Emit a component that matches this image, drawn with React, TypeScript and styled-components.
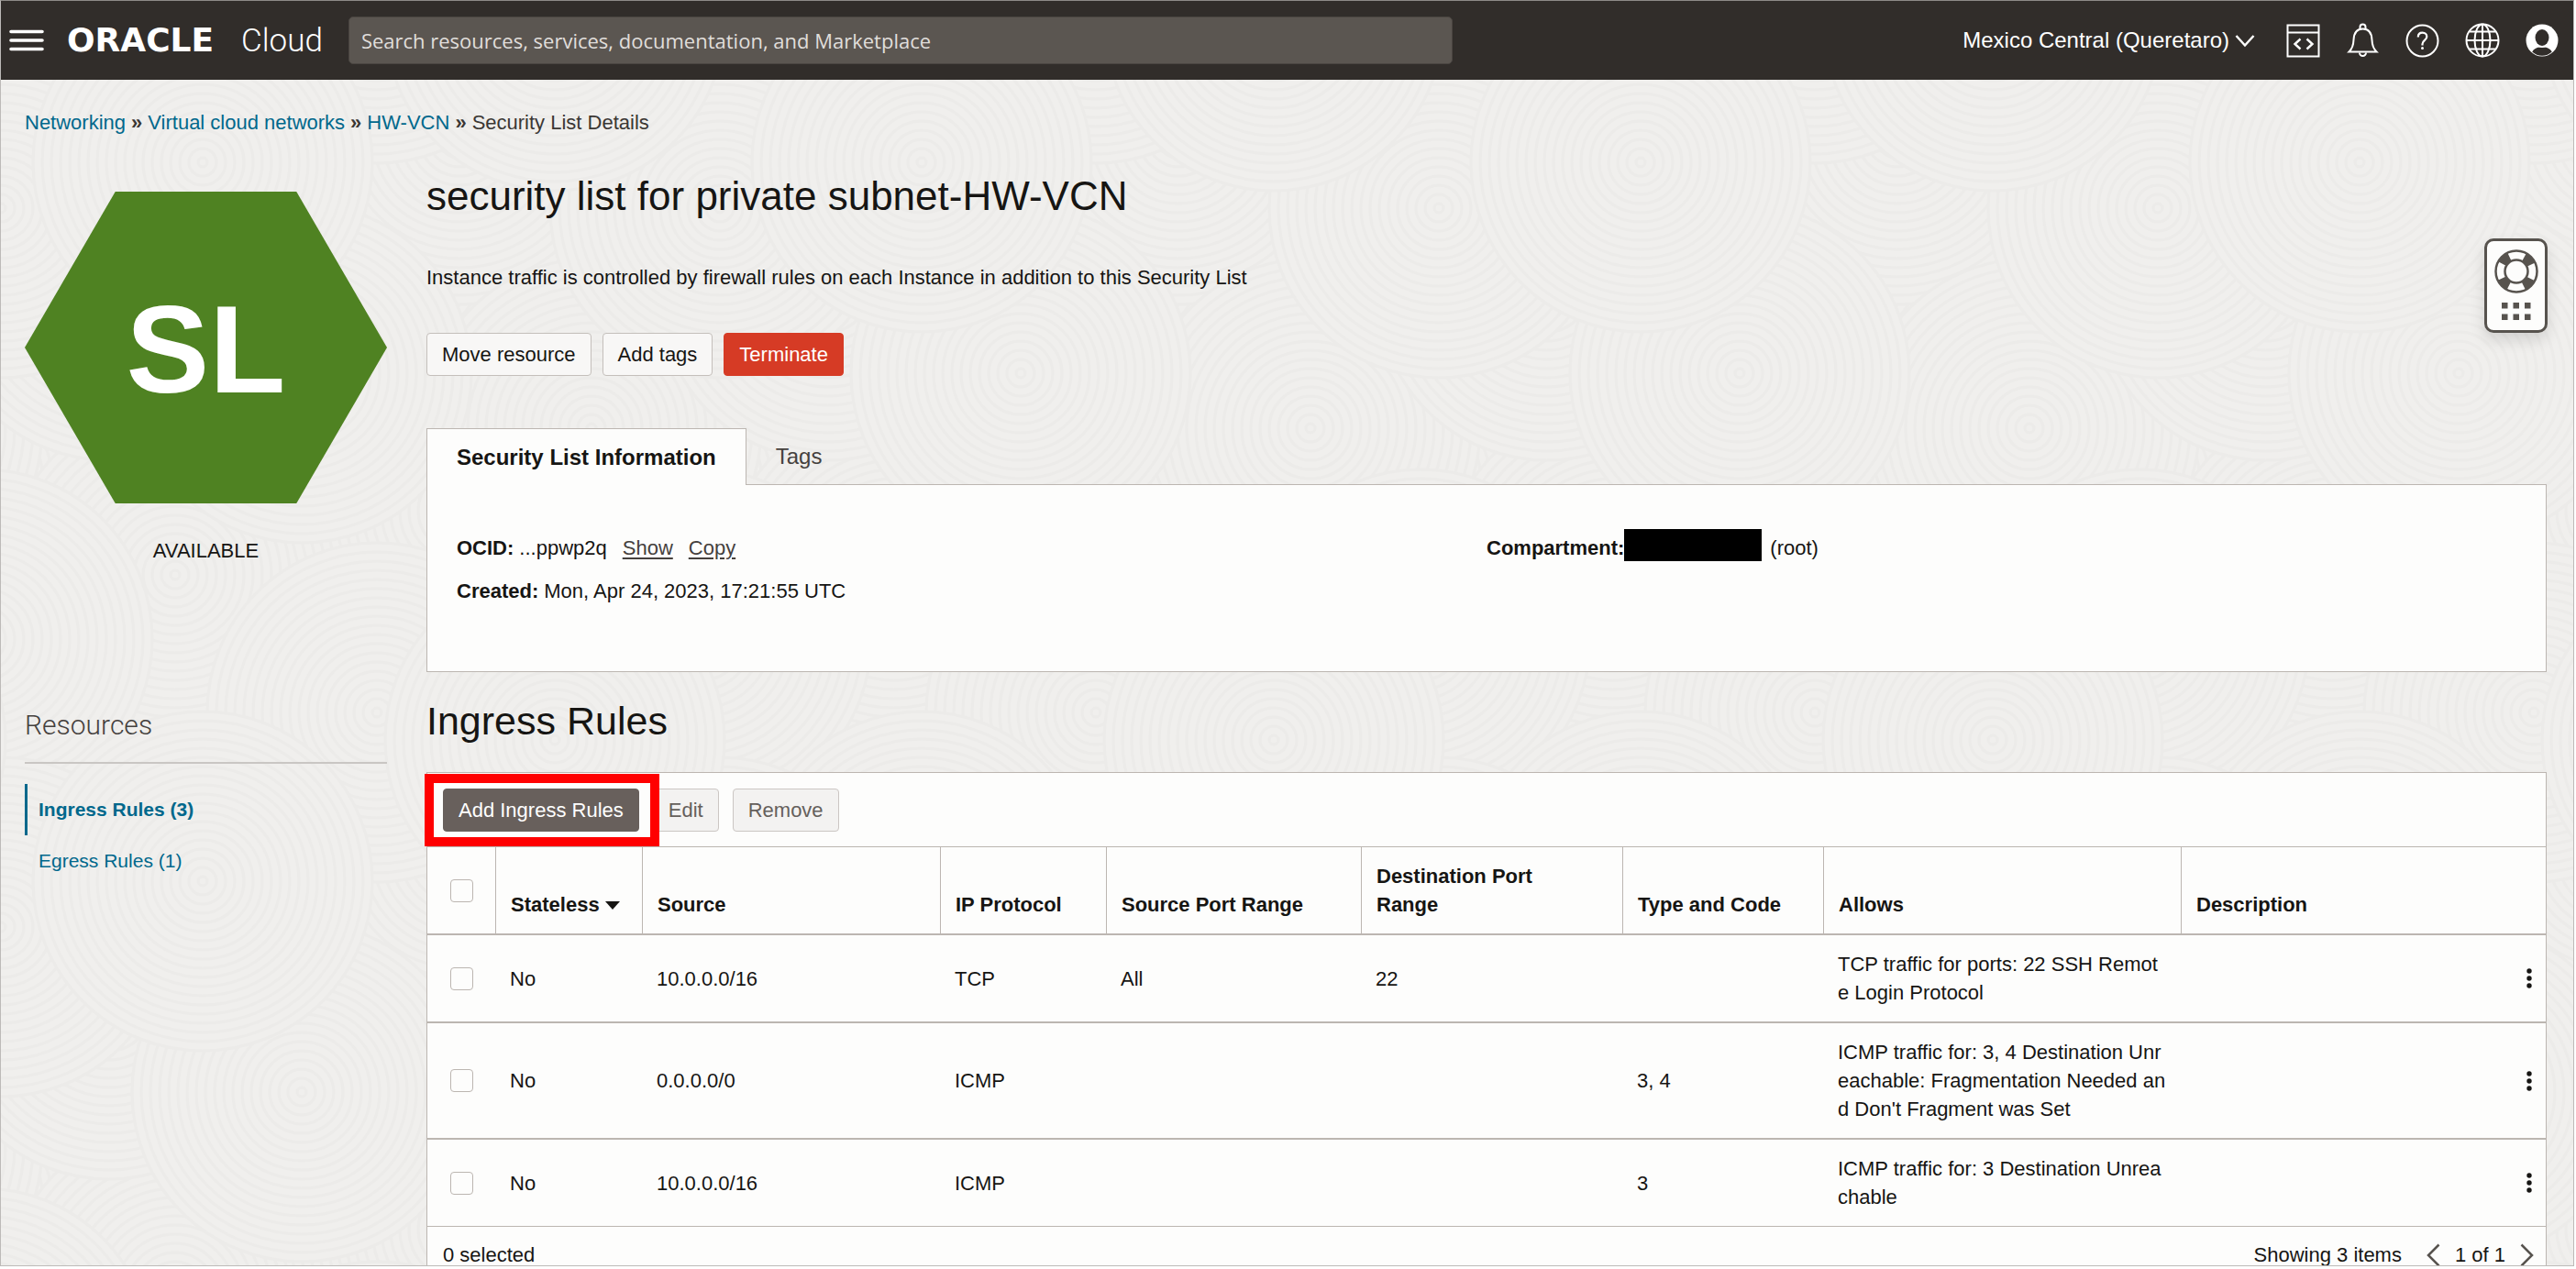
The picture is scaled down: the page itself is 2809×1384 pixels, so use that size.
import React from "react";
import styled, { createGlobalStyle, css } from "styled-components";

const sans = `"Liberation Sans", Arial, Helvetica, sans-serif`;
const ink = "#161513";
const link = "#00688c";
const line = "#bcb6b1";
const card = "#fdfdfc";

const GlobalStyle = createGlobalStyle`
  *, *::before, *::after { box-sizing: border-box; }
  body { margin: 0; background: #fff; color: ${ink}; font: 22px/30px ${sans}; }
  button, input { font: inherit; color: inherit; }
  button { cursor: pointer; }
  h1, h2, p, dl, dd, ul { margin: 0; padding: 0; }
  ul { list-style: none; }
`;

/* ---------- window ---------- */

const Frame = styled.div`
  position: relative;
  height: calc(100vh - 3px);
  min-height: 600px;
  margin-right: 2px;
  overflow: hidden;
  border: 1px solid #bdbab8;
  border-top-color: #8d8a87;
  background: #f0efed;
`;

const Texture = styled.svg`
  position: absolute;
  inset: 0;
  width: 100%;
  height: 100%;
`;

const Page = styled.div`
  position: relative;
`;

/* ---------- top bar ---------- */

const TopBar = styled.header`
  display: flex;
  align-items: center;
  height: 86px;
  padding: 0 16px 0 9px;
  background: #312d2a;
  color: #fff;
`;

const IconButton = styled.button`
  display: grid;
  place-items: center;
  flex: none;
  padding: 0;
  border: 0;
  background: none;
  color: inherit;
`;

const Brand = styled.a`
  display: flex;
  align-items: baseline;
  gap: 6px;
  margin: 0 28px 0 25px;
  color: #fff;
  text-decoration: none;
  line-height: 40px;
`;

const BrandName = styled.span`
  width: 184px;
  font-family: "DejaVu Sans", Verdana, sans-serif;
  font-size: 36px;
  font-weight: 700;
`;

const BrandProduct = styled.span`
  font-family: Roboto, sans-serif;
  font-size: 35px;
  font-weight: 300;
`;

const Search = styled.input`
  width: 43.3%;
  height: 52px;
  padding: 0 13px;
  border: 1px solid #4a4541;
  border-radius: 5px;
  background: #5b5651;
  font-family: "Open Sans", sans-serif;
  color: #fff;
  &::placeholder { color: #e0dedb; opacity: 1; }
`;

const Tools = styled.div`
  display: flex;
  align-items: center;
  gap: 28px;
  margin-left: auto;
`;

const Region = styled.button`
  display: flex;
  align-items: center;
  gap: 6px;
  margin-right: 6px;
  padding: 0;
  border: 0;
  background: none;
  font-size: 24px;
`;

/* ---------- body ---------- */

const Breadcrumb = styled.nav`
  display: flex;
  gap: 6px;
  padding: 32px 28px 0 26px;
  color: #3b3734;
`;

const TextLink = styled.a`
  color: ${link};
  text-decoration: none;
`;

const Body = styled.div`
  display: grid;
  grid-template-columns: 395px minmax(0, 1fr);
  column-gap: 43px;
  padding: 39px 29px 0 26px;
`;

const Side = styled.aside`
  padding-top: 21px;
`;

const Hexagon = styled.div`
  display: grid;
  place-items: center;
  height: 340px;
  padding-top: 4px;
  background: #4f8222;
  clip-path: polygon(25% 0, 75% 0, 100% 50%, 75% 100%, 25% 100%, 0 50%);
  color: #fff;
  font-size: 136px;
  font-weight: 700;
  line-height: 160px;
`;

const Status = styled.p`
  margin-top: 37px;
  text-align: center;
`;

const SideTitle = styled.h2`
  margin-top: 157px;
  padding-bottom: 22px;
  border-bottom: 2px solid #c9c6c3;
  color: #45413e;
  font: 300 30px/36px Roboto, sans-serif;
`;

const SideList = styled.ul`
  margin-top: 22px;
`;

const SideLink = styled(TextLink)<{ $active?: boolean }>`
  display: flex;
  align-items: center;
  height: 56px;
  padding-left: 12px;
  border-left: 3px solid transparent;
  font-size: 21px;
  ${(p) => p.$active && css`border-left-color: ${link}; font-weight: 700;`}
`;

const Title = styled.h1`
  font-size: 44px;
  font-weight: 400;
  line-height: 52px;
`;

const Lead = styled.p`
  margin-top: 48px;
`;

const Actions = styled.div`
  display: flex;
  gap: 12px;
  margin-top: 45px;
`;

type Tone = "plain" | "danger" | "primary" | "muted";

const tones = {
  plain: css`background: #f8f7f6; border-color: #c4bfbb; color: ${ink};`,
  danger: css`background: #d63b25; border-color: #d63b25; color: #fff;`,
  primary: css`background: #68605c; border-color: #68605c; color: #fff;`,
  muted: css`background: #f3f2f1; border-color: #cbc6c3; color: #65605c;`,
};

const Button = styled.button<{ $tone: Tone }>`
  height: 47px;
  padding: 0 16px;
  border: 1px solid;
  border-radius: 4px;
  ${(p) => tones[p.$tone]}
`;

const Tabs = styled.div`
  display: flex;
  margin-top: 57px;
`;

const Tab = styled.button<{ $active?: boolean }>`
  height: 61px;
  padding: 0 32px;
  border: 0;
  background: none;
  font-size: 24px;
  color: #45413e;
  ${(p) => p.$active && css`
    position: relative;
    height: 62px;
    margin-bottom: -1px;
    border: 1px solid ${line};
    border-bottom: 0;
    background: ${card};
    font-weight: 700;
    color: ${ink};
  `}
`;

const Panel = styled.section`
  border: 1px solid ${line};
  background: ${card};
`;

const Facts = styled.dl`
  display: grid;
  grid-template-columns: 1fr 1fr;
  gap: 17px 0;
  padding: 54px 32px 72px;
`;

const Fact = styled.div`
  display: flex;
  align-items: center;
  height: 30px;
`;

const Term = styled.dt`
  font-weight: 700;
`;

const Value = styled.dd`
  display: flex;
  align-items: center;
  margin-left: 6px;
`;

const RedactedValue = styled(Value)`
  margin-left: 0;
`;

const Redaction = styled.span`
  width: 150px;
  height: 35px;
  margin-right: 9px;
  margin-bottom: 8px;
  background: #000;
`;

const UnderLink = styled.a`
  margin-left: 17px;
  color: #45413e;
  text-underline-offset: 3px;
`;

const SectionTitle = styled.h2`
  margin: 27px 0 30px;
  font-size: 43px;
  font-weight: 400;
  line-height: 52px;
`;

const Toolbar = styled.div`
  display: flex;
  gap: 15px;
  padding: 17px 17px 16px;
`;

const Highlight = styled.div`
  position: relative;
  z-index: 1;
  &::after {
    content: "";
    position: absolute;
    inset: -16px -22px -16px -20px;
    border: 10px solid #f00;
    pointer-events: none;
  }
`;

/* ---------- table ---------- */

const Table = styled.table`
  width: 100%;
  table-layout: fixed;
  border-collapse: separate;
  border-spacing: 0;
  line-height: 31px;
`;

const Col = styled.col<{ $width?: string }>`
  width: ${(p) => p.$width ?? "auto"};
`;

const Head = styled.th<{ $check?: boolean }>`
  padding: 16px ${(p) => (p.$check ? 16 : 36)}px 16px 16px;
  border: solid ${line};
  border-width: 1px 0 2px ${(p) => (p.$check ? 0 : 1)}px;
  text-align: left;
  vertical-align: ${(p) => (p.$check ? "middle" : "bottom")};
`;

const HeadText = styled.span<{ $nowrap: boolean }>`
  white-space: ${(p) => (p.$nowrap ? "nowrap" : "normal")};
`;

const Cell = styled.td`
  padding: 16px;
  border-bottom: 2px solid ${line};
  word-break: break-all;
  tr:last-child > & { border-bottom-width: 1px; }
`;

const CheckWrap = styled.label`
  display: flex;
  padding-left: 9px;
`;

const Check = styled.input`
  appearance: none;
  width: 25px;
  height: 25px;
  margin: 0;
  border: 1px solid ${line};
  border-radius: 4px;
  background: ${card};
  &:checked { background: ${link}; }
`;

const RowMenu = styled(IconButton)`
  width: 8px;
  height: 30px;
  margin-left: auto;
  margin-right: -2px;
`;

const SortMark = styled.svg`
  margin-left: 6px;
  vertical-align: 2px;
`;

const Footer = styled.footer`
  display: flex;
  align-items: center;
  justify-content: space-between;
  padding: 16px 13px 16px 17px;
`;

const Pager = styled.div`
  display: flex;
  align-items: center;
  gap: 16px;
`;

const PagerText = styled.span`
  margin-right: 11px;
`;

const PagerButton = styled(IconButton)`
  color: #57534e;
`;

const HelpDock = styled.aside`
  position: absolute;
  top: 259px;
  right: 28px;
  display: flex;
  flex-direction: column;
  align-items: center;
  gap: 10px;
  width: 69px;
  height: 103px;
  padding-top: 9px;
  border: 3px solid #57534e;
  border-radius: 10px;
  background: ${card};
  color: #57534e;
  box-shadow: 0 8px 16px rgba(0, 0, 0, 0.12);
`;

/* ---------- drawings ---------- */

const TILE = 784;
const discs = [
  [20, 560, 1], [410, 690, 1], [590, 560, 1], [190, 430, 1], [480, 390, 1],
  [740, 330, 1], [60, 200, 1], [640, 200, 1], [230, 700, 1], [528, 10, 1],
  [118, 40, 1], [700, 60, 1], [390, 540, 1], [700, 470, 1], [60, 380, 1],
  [318, 230, 1], [528, 320, 1], [180, 610, 1], [610, 690, 1], [200, 140, 1],
  [420, 90, 1], [20, 720, 1],
];

function Backdrop() {
  return (
    <Texture aria-hidden="true">
      <defs>
        <g id="disc">
          {Array.from({ length: 19 }, (_, i) => (
            <circle key={i} r={185 - i * 10} fill="#f0efed" stroke="#ecebe9" strokeWidth="3" />
          ))}
        </g>
        <pattern id="rings" x="584" y="86" width={TILE} height={TILE} patternUnits="userSpaceOnUse">
          {discs.map(([x, y], i) => (
            <g key={i}>
              {[-TILE, 0, TILE].map((dx) =>
                [-TILE, 0, TILE].map((dy) => <use key={`${dx}.${dy}`} href="#disc" x={x + dx} y={y + dy} />)
              )}
            </g>
          ))}
        </pattern>
      </defs>
      <rect width="100%" height="100%" fill="url(#rings)" />
    </Texture>
  );
}

const stroke = { fill: "none", stroke: "currentColor", strokeWidth: 2 };

const MenuIcon = () => (
  <svg width="38" height="24" viewBox="0 0 38 24" {...stroke} strokeWidth="3.6" strokeLinecap="round">
    <path d="M2 2.5h34M2 12h34M2 21.5h34" />
  </svg>
);
const CodeIcon = () => (
  <svg width="37" height="37" viewBox="0 0 37 37" {...stroke}>
    <path d="M1.5 1.5h34v34h-34zM1.5 9.5h34" />
    <path d="M15.5 16.5l-6 5.500 6 5.500M22.5 16.5l6 5.500-6 5.500" strokeWidth="2.4" />
  </svg>
);
const BellIcon = () => (
  <svg width="37" height="38" viewBox="0 0 37 38" {...stroke}>
    <path d="M15.5 6V4.5a3 3 0 0 1 6 0V6M3.5 31.5c3.600-3.500 4.800-7 5-13C8.800 11.500 12 6.500 18.500 6.500s9.700 5 10 12c.2 6 1.400 9.500 5 13z" />
    <path d="M15 32.5a3.500 3.500 0 0 0 7 0" />
  </svg>
);
const HelpIcon = () => (
  <svg width="37" height="37" viewBox="0 0 37 37" {...stroke}>
    <circle cx="18.5" cy="18.5" r="17" />
    <path d="M13.8 14.5c0-3 2-4.800 4.800-4.800s4.700 1.800 4.700 4.300c0 3.800-4.800 4-4.800 8v1.500" strokeWidth="2.2" />
    <circle cx="18.5" cy="26.5" r="1.5" fill="currentColor" stroke="none" />
  </svg>
);
const GlobeIcon = () => (
  <svg width="38" height="38" viewBox="0 0 38 38" {...stroke}>
    <circle cx="19" cy="19" r="17.5" />
    <ellipse cx="19" cy="19" rx="8.5" ry="17.5" />
    <path d="M1.5 19h35M5 9.5h28M5 28.5h28M19 1.5v35" />
  </svg>
);
const UserIcon = () => (
  <svg width="36" height="36" viewBox="0 0 36 36">
    <circle cx="18" cy="18" r="17.5" fill="#fff" />
    <ellipse cx="18" cy="15" rx="7.5" ry="9" fill="#312d2a" />
    <path d="M7.2 30.5c2-3.500 4.800-4.300 7.500-5h6.600c2.700.7 5.500 1.500 7.500 5a16 16 0 0 1-21.600 0z" fill="#312d2a" />
    <path d="M12.5 23.2a8.300 8.300 0 0 0 11 0" fill="none" stroke="#fff" strokeWidth="1.5" />
  </svg>
);
const Chevron = ({ d, w, h }: { d: string; w: number; h: number }) => (
  <svg width={w} height={h} viewBox={`0 0 ${w} ${h}`} {...stroke} strokeWidth="2.5">
    <path d={d} />
  </svg>
);
const DotsIcon = () => (
  <svg width="6" height="22" viewBox="0 0 6 22" fill={ink}>
    <circle cx="3" cy="3" r="2.7" />
    <circle cx="3" cy="11" r="2.7" />
    <circle cx="3" cy="19" r="2.7" />
  </svg>
);
const LifebuoyIcon = () => (
  <svg width="48" height="48" viewBox="0 0 48 48" {...stroke}>
    <circle cx="24" cy="24" r="17.5" strokeWidth="10" strokeDasharray="11 16.49" strokeDashoffset="-8.24" />
    <circle cx="24" cy="24" r="22.5" strokeWidth="2.5" />
    <circle cx="24" cy="24" r="12.5" strokeWidth="2.5" />
  </svg>
);
const GridDots = () => (
  <svg width="32" height="20" viewBox="0 0 32 20" fill="currentColor">
    {[0, 12.5, 25].map((x) => [0, 12.5].map((y) => <rect key={`${x}.${y}`} x={x} y={y} width="6.5" height="6.5" />))}
  </svg>
);

/* ---------- data ---------- */

const columns = [
  ["Stateless", "160px"], ["Source", "325px"], ["IP Protocol", "181px"],
  ["Source Port Range", "278px"], ["Destination Port Range", "285px"],
  ["Type and Code", "219px"], ["Allows", "390px"], ["Description", undefined],
] as const;

const rules = [
  ["No", "10.0.0.0/16", "TCP", "All", "22", "", "TCP traffic for ports: 22 SSH Remote Login Protocol"],
  ["No", "0.0.0.0/0", "ICMP", "", "", "3, 4", "ICMP traffic for: 3, 4 Destination Unreachable: Fragmentation Needed and Don't Fragment was Set"],
  ["No", "10.0.0.0/16", "ICMP", "", "", "3", "ICMP traffic for: 3 Destination Unreachable"],
];

export default function App() {
  return (
    <>
      <GlobalStyle />
      <Frame>
        <Backdrop />
        <Page>
          <TopBar>
            <IconButton aria-label="Open navigation menu"><MenuIcon /></IconButton>
            <Brand href="#">
              <BrandName>ORACLE</BrandName>
              <BrandProduct>Cloud</BrandProduct>
            </Brand>
            <Search
              type="search"
              aria-label="Search"
              placeholder="Search resources, services, documentation, and Marketplace"
            />
            <Tools>
              <Region>
                Mexico Central (Queretaro)
                <Chevron w={22} h={15} d="M1.500 2l9.500 10.500L20.500 2" />
              </Region>
              <IconButton aria-label="Developer tools"><CodeIcon /></IconButton>
              <IconButton aria-label="Announcements"><BellIcon /></IconButton>
              <IconButton aria-label="Help"><HelpIcon /></IconButton>
              <IconButton aria-label="Language"><GlobeIcon /></IconButton>
              <IconButton aria-label="Profile"><UserIcon /></IconButton>
            </Tools>
          </TopBar>

          <Breadcrumb aria-label="Breadcrumb">
            <TextLink href="#">Networking</TextLink>
            <b>»</b>
            <TextLink href="#">Virtual cloud networks</TextLink>
            <b>»</b>
            <TextLink href="#">HW-VCN</TextLink>
            <b>»</b>
            <span>Security List Details</span>
          </Breadcrumb>

          <Body>
            <Side>
              <Hexagon>SL</Hexagon>
              <Status>AVAILABLE</Status>
              <SideTitle>Resources</SideTitle>
              <SideList>
                <li><SideLink href="#" $active>Ingress Rules (3)</SideLink></li>
                <li><SideLink href="#">Egress Rules (1)</SideLink></li>
              </SideList>
            </Side>

            <main>
              <Title>security list for private subnet-HW-VCN</Title>
              <Lead>
                Instance traffic is controlled by firewall rules on each Instance in addition to this Security List
              </Lead>
              <Actions>
                <Button $tone="plain">Move resource</Button>
                <Button $tone="plain">Add tags</Button>
                <Button $tone="danger">Terminate</Button>
              </Actions>

              <Tabs role="tablist">
                <Tab role="tab" aria-selected="true" $active>Security List Information</Tab>
                <Tab role="tab" aria-selected="false">Tags</Tab>
              </Tabs>
              <Panel>
                <Facts>
                  <Fact>
                    <Term>OCID:</Term>
                    <Value>
                      ...ppwp2q
                      <UnderLink href="#">Show</UnderLink>
                      <UnderLink href="#">Copy</UnderLink>
                    </Value>
                  </Fact>
                  <Fact>
                    <Term>Compartment:</Term>
                    <RedactedValue><Redaction />(root)</RedactedValue>
                  </Fact>
                  <Fact>
                    <Term>Created:</Term>
                    <Value>Mon, Apr 24, 2023, 17:21:55 UTC</Value>
                  </Fact>
                </Facts>
              </Panel>

              <SectionTitle>Ingress Rules</SectionTitle>
              <Panel>
                <Toolbar>
                  <Highlight><Button $tone="primary">Add Ingress Rules</Button></Highlight>
                  <Button $tone="muted">Edit</Button>
                  <Button $tone="muted">Remove</Button>
                </Toolbar>
                <Table>
                  <colgroup>
                    <Col $width="74px" />
                    {columns.map(([name, width]) => <Col key={name} $width={width} />)}
                    <Col $width="60px" />
                  </colgroup>
                  <thead>
                    <tr>
                      <Head $check>
                        <CheckWrap><Check type="checkbox" aria-label="Select all rules" /></CheckWrap>
                      </Head>
                      {columns.map(([name], i) => (
                        <Head key={name} colSpan={i === columns.length - 1 ? 2 : 1}>
                          <HeadText $nowrap={i === 0}>
                            {name}
                            {i === 0 && (
                              <SortMark width="16" height="9" viewBox="0 0 16 9"><path d="M0 0h16L8 9z" fill={ink} /></SortMark>
                            )}
                          </HeadText>
                        </Head>
                      ))}
                    </tr>
                  </thead>
                  <tbody>
                    {rules.map((rule, r) => (
                      <tr key={r}>
                        <Cell>
                          <CheckWrap><Check type="checkbox" aria-label={`Select rule ${r + 1}`} /></CheckWrap>
                        </Cell>
                        {rule.map((text, c) => <Cell key={c}>{text}</Cell>)}
                        <Cell />
                        <Cell><RowMenu aria-label="Rule actions"><DotsIcon /></RowMenu></Cell>
                      </tr>
                    ))}
                  </tbody>
                </Table>
                <Footer>
                  <span>0 selected</span>
                  <Pager>
                    <PagerText>Showing 3 items</PagerText>
                    <PagerButton aria-label="Previous page"><Chevron w={15} h={26} d="M13.500 1.500L2 13l11.500 11.500" /></PagerButton>
                    <span>1 of 1</span>
                    <PagerButton aria-label="Next page"><Chevron w={15} h={26} d="M1.500 1.500L13 13 1.500 24.500" /></PagerButton>
                  </Pager>
                </Footer>
              </Panel>
            </main>
          </Body>
        </Page>
        <HelpDock aria-label="Support">
          <LifebuoyIcon />
          <GridDots />
        </HelpDock>
      </Frame>
    </>
  );
}
